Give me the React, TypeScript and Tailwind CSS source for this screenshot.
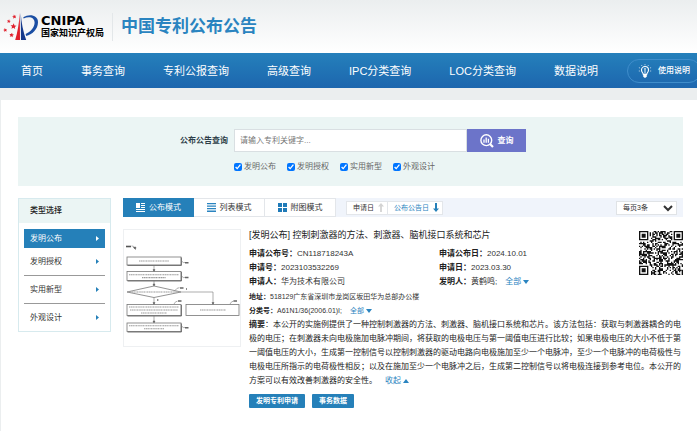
import { useState } from 'react';
import type { ReactNode } from 'react';

const NAV = ['首页', '事务查询', '专利公报查询', '高级查询', 'IPC分类查询', 'LOC分类查询', '数据说明'];
const TYPES = ['发明公布', '发明授权', '实用新型', '外观设计'];

function LogoMark() {
  const star = 'M0,-2.4 L0.7,-0.8 L2.4,-0.7 L1.1,0.4 L1.5,2.1 L0,1.2 L-1.5,2.1 L-1.1,0.4 L-2.4,-0.7 L-0.7,-0.8 Z';
  return (
    <svg viewBox="0 0 36 28" className="h-7 w-9 shrink-0" aria-hidden="true">
      <g fill="#e0202c">
        <path d={star} transform="translate(11.3 3.7) rotate(-12) scale(0.9)" />
        <path d={star} transform="translate(5.8 8.2) rotate(10) scale(0.8)" />
        <path d={star} transform="translate(2.2 17) rotate(-15) scale(0.85)" />
        <path d={star} transform="translate(8.6 22) rotate(10)" />
        <path d={star} transform="translate(10.5 13.3) rotate(5) scale(1.25)" />
        <path d="M16.8 0 L17 27 L12.2 27 Q15.8 15 16.8 0 Z" />
      </g>
      <path d="M17.7 0 Q18.7 15 23.2 27 L18 27 Z" fill="#14398c" />
      <path
        d="M20.3 4.2 C26 .6 35 1.6 35 9.2 C35 16.2 29 21.6 23.2 23 L22.6 21 C27.5 18.8 31.6 14.6 31.6 9.6 C31.6 4.2 26 2.8 20.6 5.4 Z"
        fill="#1a4ea3"
      />
    </svg>
  );
}

function BulbIcon() {
  return (
    <svg viewBox="0 0 14 14" className="h-3.5 w-3.5" fill="none" stroke="white" aria-hidden="true">
      <path d="M5.3 10.4 C5.2 9 3.5 8.2 3.5 6 A3.5 3.5 0 0 1 10.5 6 C10.5 8.2 8.8 9 8.7 10.4 Z" strokeWidth="1.1" />
      <path d="M5.4 11 H8.6 V12.4 L7.7 13.6 H6.3 L5.4 12.4 Z" fill="white" strokeWidth="0.4" />
      <path d="M7 5 V9.6 M6.2 4.7 H7.8" strokeWidth="0.9" />
      <path d="M7 0 V1.3 M3.4 1 L4.1 2 M10.6 1 L9.9 2 M.9 3.6 L2 4 M13.1 3.6 L12 4 M.8 7 H2 M12 7 H13.2" strokeWidth="0.6" />
    </svg>
  );
}

function SearchChartIcon() {
  return (
    <svg viewBox="0 0 14 14" className="h-3.5 w-3.5" fill="none" stroke="white" aria-hidden="true">
      <circle cx="6.3" cy="6.2" r="5.4" strokeWidth="1.4" />
      <path d="M4 5.4 V8.8 M6.2 3.4 V8.8 M8.4 4.8 V8.8" strokeWidth="1.3" />
      <path d="M10 10 L13 13" strokeWidth="2.2" />
    </svg>
  );
}

function Caret({ up = false }: { up?: boolean }) {
  return (
    <svg viewBox="0 0 6 4" className="ml-0.5 inline-block h-1 w-1.5 align-middle" fill="#2a84c0" aria-hidden="true">
      <path d={up ? 'M3 0 L6 4 H0 Z' : 'M0 0 H6 L3 4 Z'} />
    </svg>
  );
}

function CardIcon() {
  return (
    <svg viewBox="0 0 9 9" className="h-[9px] w-[9px]" fill="white" aria-hidden="true">
      <path d="M0 0 H4 V5 H0 Z M5 0 H9 V1 H5 Z M5 2 H9 V3 H5 Z M5 4 H9 V5 H5 Z M0 6 H9 V7 H0 Z M0 8 H9 V9 H0 Z" />
    </svg>
  );
}

function ListIcon() {
  return (
    <svg viewBox="0 0 9 9" className="h-[9px] w-[9px]" fill="#2a84c0" aria-hidden="true">
      <path d="M0 0 H9 V1.3 H0 Z M0 2.5 H9 V3.8 H0 Z M0 5 H9 V6.3 H0 Z M0 7.6 H9 V8.9 H0 Z" />
    </svg>
  );
}

function GridIcon() {
  return (
    <svg viewBox="0 0 9 9" className="h-[9px] w-[9px]" fill="#1f7ab8" aria-hidden="true">
      <path d="M0 0 H4 V4 H0 Z M5 0 H9 V4 H5 Z M0 5 H4 V9 H0 Z M5 5 H9 V9 H5 Z" />
    </svg>
  );
}

function Arrow({ up = false, color }: { up?: boolean; color: string }) {
  return (
    <svg viewBox="0 0 6 9" className="h-[9px] w-1.5" fill={color} aria-hidden="true">
      <path d={up ? 'M3 0 L6 3.4 H3.9 V9 H2.1 V3.4 H0 Z' : 'M3 9 L6 5.4 H4 V0 H2 V5.4 H0 Z'} />
    </svg>
  );
}

// dashes stand in for the tiny captions of the flow chart
function FlowChart() {
  const caption = { stroke: '#999', strokeWidth: 1.1, strokeDasharray: '1.5 .5 1 .4' };
  return (
    <svg viewBox="0 0 116 116" className="block w-full" fill="none" stroke="#777" strokeWidth="0.6" role="img" aria-label="摘要附图">
      <path d="M2 16.5 h5" stroke="#555" strokeWidth="1.6" />
      <path d="M7.5 16 q2 -.5 3.6 2" />
      <path d="M9.3 17.4 l2.6 -.4 l-.4 2.4 Z" fill="#333" />
      <g strokeWidth="0.8">
        <rect x="3" y="27" width="54" height="8" />
        <rect x="3" y="41.5" width="54" height="9" />
        <path d="M3 62 L30 56 L57 62 L30 67.5 Z" />
        <rect x="3" y="74.5" width="54" height="11" />
        <rect x="62" y="74.5" width="53" height="11" />
        <rect x="3" y="93" width="54" height="8.5" />
      </g>
      <path d="M57.4 27.5 V35.4 H3.5 M57.4 42 V51 H3.5 M57.4 75 V86 H3.5 M57.4 93.5 V102 H3.5" stroke="#555" strokeWidth="0.8" />
      <path d="M30 35 V41 M30 50.5 V56 M30 67.5 V74 M30 85.5 V92.5 M57 62 H89 V74" />
      <path d="M29 39.6 h2 l-1 2 Z M29 54 h2 l-1 2 Z M29 72.5 h2 l-1 2 Z M29 91 h2 l-1 2 Z M88 72.5 h2 l-1 2 Z" fill="#333" />
      <path d="M15 31 H45" {...caption} />
      <path d="M5 44.7 H55 M18 47.6 H42" {...caption} />
      <path d="M6 62 H54" {...caption} />
      <path d="M5 77 H55 M6 80 H54 M17 83 H43" {...caption} />
      <path d="M76 80 H102" {...caption} />
      <path d="M5 95.8 H55 M20 98.8 H40" {...caption} />
      <path d="M57.5 31 q2 2.4 3.5 1.4 M57.5 46 q2 2.4 3.5 1.4 M51 60.5 q2 -3 4.5 -2.8 M50 74 q1.5 -3 3.5 -2.8 M106 74 q1.5 -3 3.5 -2.8 M57.5 96 q2 2.4 3.5 1.4" />
      <path d="M61 32.8 h3.5 M61 47.6 h3.5 M56 58 h3.5 M54 71 h3.5 M109.5 71 h3.5 M61 97.8 h3.5 M62 59 h1 M33 70 h1.4" stroke="#666" strokeWidth="1.5" />
    </svg>
  );
}

const QR_SIZE = 33;

function qrPath() {
  const finders = [[0, 0], [QR_SIZE - 7, 0], [0, QR_SIZE - 7]];
  let seed = 20231;
  let d = '';
  for (let y = 0; y < QR_SIZE; y++) {
    for (let x = 0; x < QR_SIZE; x++) {
      seed = (seed * 1103515245 + 12345) % 2147483648;
      const nearFinder = finders.some(([fx, fy]) => x >= fx - 1 && x <= fx + 7 && y >= fy - 1 && y <= fy + 7);
      if (!nearFinder && (seed >> 12) % 100 < 52) d += `M${x} ${y}h1v1h-1z`;
    }
  }
  for (const [x, y] of finders) {
    d += `M${x} ${y}h7v7h-7z M${x + 1} ${y + 1}v5h5v-5z M${x + 2} ${y + 2}h3v3h-3z`;
  }
  return d;
}

function QrCode() {
  return (
    <svg viewBox={`0 0 ${QR_SIZE} ${QR_SIZE}`} className="h-11 w-11 shrink-0" role="img" aria-label="二维码">
      <path d={qrPath()} fill="#111" />
    </svg>
  );
}

function Field({ label, children }: { label: string; children: ReactNode }) {
  return (
    <div>
      <dt className="inline font-bold text-[#222]">{label}：</dt>
      <dd className="inline">{children}</dd>
    </div>
  );
}

function MoreLink({ children, up }: { children: ReactNode; up?: boolean }) {
  return (
    <a href="#" className="ml-2 whitespace-nowrap text-[#2a84c0]">
      {children}
      <Caret up={up} />
    </a>
  );
}

export default function App() {
  const [active, setActive] = useState(TYPES[0]);
  const [checked, setChecked] = useState(TYPES);

  function toggle(type: string) {
    setChecked((prev) => (prev.includes(type) ? prev.filter((t) => t !== type) : [...prev, type]));
  }

  return (
    <div
      lang="zh-CN"
      className="flex min-h-screen flex-col overflow-x-hidden bg-white font-['Liberation_Sans','Noto_Sans_CJK_SC',sans-serif] text-[8px] leading-[14px] text-[#333]"
    >
      <header className="flex h-[53px] items-center bg-linear-to-b from-[#ebeeef] to-white pl-[3px]">
        <LogoMark />
        <div className="ml-0.5 text-black">
          <div className="font-['DejaVu_Sans',sans-serif] text-[13px] leading-[13px] font-bold">CNIPA</div>
          <div className="text-[9px] leading-3 font-bold">国家知识产权局</div>
        </div>
        <h1 className="ml-2 border-l border-[#e3e7e9] pl-2 text-[17px] leading-7 font-bold text-[#2a84c0]">
          中国专利公布公告
        </h1>
      </header>

      <nav className="flex h-[35px] shrink-0 items-center bg-linear-to-b from-[#2580bb] to-[#1d66ae] pl-0.5 text-[11px] whitespace-nowrap text-white">
        {NAV.map((item) => (
          <a key={item} href="#" className="px-[19px]">
            {item}
          </a>
        ))}
        <a
          href="#"
          className="-mr-1 ml-auto flex h-6 shrink-0 items-center gap-1.5 rounded-full border border-[#3f8dcb] px-2.5 text-[8px] font-medium"
        >
          <BulbIcon />
          使用说明
        </a>
      </nav>
      <div className="h-3 bg-[#ebeeef]" />

      <main className="flex-1 border-l border-[#ebeeef] pt-[17px] pr-3.5 pb-4 pl-[17px]">
        <form
          onSubmit={(e) => e.preventDefault()}
          className="grid grid-cols-[210px_292px] gap-x-1.5 bg-[#ebf5f4] pt-3 pb-3"
        >
          <label htmlFor="keyword" className="self-center text-right font-bold text-[#2d3e48]">
            公布公告查询
          </label>
          <div className="flex h-[23px]">
            <input
              id="keyword"
              type="text"
              placeholder="请输入专利关键字..."
              className="min-w-0 flex-1 border border-[#d9dfe2] bg-white px-[5px] placeholder:text-[#777]"
            />
            <button type="submit" className="flex w-[59px] items-center justify-center gap-1 bg-[#6c74c9] font-bold text-white">
              <SearchChartIcon />
              查询
            </button>
          </div>
          <div className="col-start-2 mt-2 flex gap-[11px]">
            {TYPES.map((type) => (
              <label key={type} className="flex items-center gap-0.5 text-[#666]">
                <input
                  type="checkbox"
                  checked={checked.includes(type)}
                  onChange={() => toggle(type)}
                  className="h-2 w-2 accent-[#0075ff]"
                />
                {type}
              </label>
            ))}
          </div>
        </form>

        <div className="mt-3 flex items-start gap-3">
          <aside className="w-[93px] shrink-0 border border-[#d7eaee]">
            <h2 className="h-6 bg-[#ebf5f4] pl-[11px] leading-6 font-medium text-[#222]">类型选择</h2>
            <ul className="px-[5px] pt-1.5">
              {TYPES.map((type) => (
                <li key={type} className={type === active || type === '外观设计' ? '' : 'border-b border-[#999]'}>
                  <button
                    type="button"
                    onClick={() => setActive(type)}
                    className={
                      type === active
                        ? 'flex h-[19px] w-full items-center justify-between bg-[#2580b9] px-1.5 text-white'
                        : 'flex h-[27px] w-full items-center justify-between px-1.5'
                    }
                  >
                    {type}
                    <svg viewBox="0 0 3 5" className="h-[5px] w-[3px]" aria-hidden="true">
                      <path d="M0 0 L3 2.5 L0 5 Z" fill={type === active ? 'white' : '#2580b9'} />
                    </svg>
                  </button>
                </li>
              ))}
            </ul>
          </aside>

          <section className="min-w-0 flex-1">
            <div className="flex h-[19px] items-center bg-[#f0f4fb]">
              <div className="flex h-full">
                <button type="button" className="flex w-[71px] items-center justify-center gap-1 bg-[#2580b9] text-white">
                  <CardIcon />
                  公布模式
                </button>
                <button type="button" className="flex w-[71px] items-center justify-center gap-1 border border-l-0 border-[#e3e6ea] bg-white">
                  <ListIcon />
                  列表模式
                </button>
                <button type="button" className="flex w-[71px] items-center justify-center gap-1 border border-l-0 border-[#e3e6ea] bg-white">
                  <GridIcon />
                  附图模式
                </button>
              </div>
              <div className="ml-2.5 flex h-3.5 text-[7px]">
                <button type="button" className="flex items-center gap-1 border border-[#e3e6ea] bg-white pr-[3px] pl-1.5">
                  申请日
                  <Arrow up color="#d3d3d3" />
                </button>
                <button type="button" className="flex items-center gap-1 border border-l-0 border-[#e3e6ea] bg-white pr-[3px] pl-1.5 text-[#2a84c0]">
                  公布公告日
                  <Arrow color="#2580b9" />
                </button>
              </div>
              <select
                aria-label="每页条数"
                className="mr-1.5 ml-auto h-3.5 w-[61px] border border-[#e0e3e6] bg-white pl-0.5 text-[7px] leading-3"
              >
                <option>每页3条</option>
                <option>每页10条</option>
              </select>
            </div>

            <article className="mt-3 flex items-start gap-2">
              <div className="w-[118px] shrink-0 border border-[#eef0f2]">
                <FlowChart />
              </div>
              <div className="min-w-0 flex-1">
                <div className="flex items-start justify-between">
                  <div className="min-w-0 flex-1">
                    <h2 className="text-[9px] leading-3 text-[#222]">
                      [发明公布] 控制刺激器的方法、刺激器、脑机接口系统和芯片
                    </h2>
                    <dl className="mt-1.5 grid grid-cols-[190px_1fr]">
                      <Field label="申请公布号">CN118718243A</Field>
                      <Field label="申请公布日">2024.10.01</Field>
                      <Field label="申请号">2023103532269</Field>
                      <Field label="申请日">2023.03.30</Field>
                      <Field label="申请人">华为技术有限公司</Field>
                      <Field label="发明人">
                        黄鹤鸣;
                        <MoreLink>全部</MoreLink>
                      </Field>
                    </dl>
                    <dl className="mt-px text-[7px]">
                      <Field label="地址">518129广东省深圳市龙岗区坂田华为总部办公楼</Field>
                      <Field label="分类号">
                        A61N1/36(2006.01)I;
                        <MoreLink>全部</MoreLink>
                      </Field>
                    </dl>
                  </div>
                  <div className="pt-0.5">
                    <QrCode />
                  </div>
                </div>
                <p className="text-[#222]">
                  <b>摘要</b>
                  ：本公开的实施例提供了一种控制刺激器的方法、刺激器、脑机接口系统和芯片。该方法包括：获取与刺激器耦合的电极的电压；在刺激器未向电极施加电脉冲期间，将获取的电极电压与第一阈值电压进行比较；如果电极电压的大小不低于第一阈值电压的大小，生成第一控制信号以控制刺激器的驱动电路向电极施加至少一个电脉冲，至少一个电脉冲的电荷极性与电极电压所指示的电荷极性相反；以及在施加至少一个电脉冲之后，生成第二控制信号以将电极连接到参考电位。本公开的方案可以有效改善刺激器的安全性。
                  <MoreLink up>收起</MoreLink>
                </p>
                <div className="mt-1.5 flex gap-[7px] text-[7px] text-white">
                  <button type="button" className="h-3.5 rounded-[1px] bg-[#2580b9] px-[7px] font-bold">
                    发明专利申请
                  </button>
                  <button type="button" className="h-3.5 rounded-[1px] bg-[#2580b9] px-[7px] font-bold">
                    事务数据
                  </button>
                </div>
              </div>
            </article>
          </section>
        </div>
      </main>
    </div>
  );
}
